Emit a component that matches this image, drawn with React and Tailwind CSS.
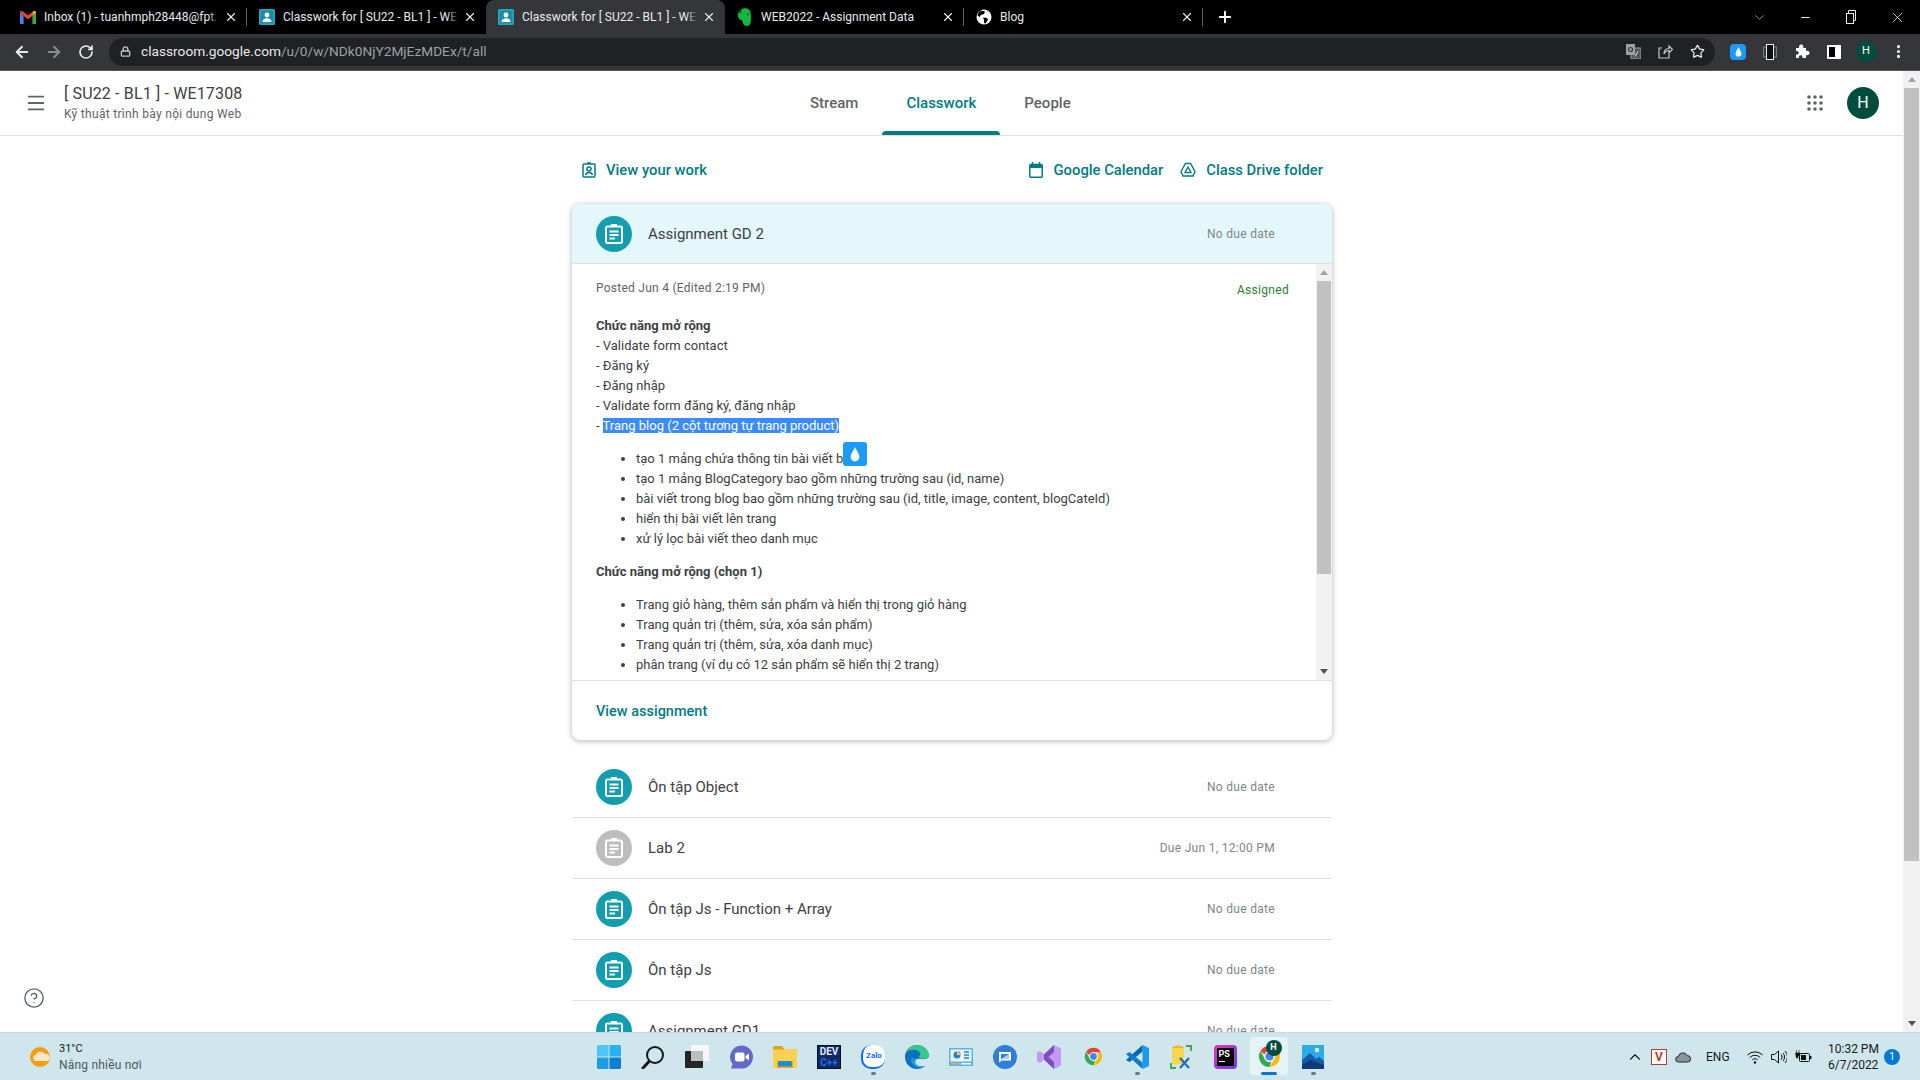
import React from 'react';
import {
  ArrowLeft, ArrowRight, RotateCw, Lock, Star, EllipsisVertical, X, Plus, Minus, ChevronDown,
  ChevronUp, Menu, CircleHelp,
} from 'lucide-react';

const font = { fontFamily: 'Roboto, "Noto Sans", sans-serif' };

const GmailIcon = () => (
  <svg width="16" height="13" viewBox="0 0 16 13">
    <path d="M0 1.500V12a1 1 0 0 0 1 1h2.600V5z" fill="#4285f4" />
    <path d="M12.400 13H15a1 1 0 0 0 1-1V1.500L12.400 5z" fill="#34a853" />
    <path d="M0 1.500 3.600 5 8 8.300 12.400 5V1 L8 4.300 3.600 1 2.500.2C1.300-.5 0 .3 0 1.500z" fill="#ea4335" />
    <path d="M12.400 5 16 1.500c0-1.200-1.300-2-2.500-1.300L12.400 1z" fill="#fbbc04" />
  </svg>
);

const ClassroomIcon = () => (
  <svg width="16" height="16" viewBox="0 0 16 16">
    <rect width="16" height="16" rx="1.500" fill="#25a8c0" />
    <rect x="1.500" y="1.500" width="13" height="13" fill="#1b8da3" />
    <circle cx="8" cy="6" r="2.400" fill="#fff" />
    <path d="M3.500 13c0-2.600 2-3.800 4.500-3.800s4.500 1.200 4.500 3.800z" fill="#fff" />
  </svg>
);

const EvernoteIcon = () => (
  <svg width="15" height="18" viewBox="0 0 15 18">
    <path d="M4.500 1.500 1 5c-.5 3 .5 6.500 3 7 1.500.3 1.500 1.500 1.800 3 .4 2 2.200 3 4.700 3 2.500 0 3.500-3 3.500-8 0-4-.5-7.500-2-8.500C10.500.5 8.500 0 7 .3 5.500.6 5 .8 4.500 1.500z" fill="#14b83e" />
    <path d="M1 5.200h3.500V1.700z" fill="#0a6b24" />
    <circle cx="11" cy="6.500" r="1" fill="#0a6b24" />
  </svg>
);

const BlogGlobe = () => (
  <svg width="16" height="16" viewBox="0 0 16 16">
    <circle cx="8" cy="8" r="7.500" fill="#fff" />
    <path d="M5 1.500 9 2.500 8 5 5 6 3.500 8 1.500 6.500C2 4 3.200 2.500 5 1.500zM7 8.500l4 .5 1 2-2.500 3.500L8 14 8 11z" fill="#000" />
  </svg>
);

const TABS = [
  { title: 'Inbox (1) - tuanhmph28448@fpt.', icon: <GmailIcon /> },
  { title: 'Classwork for [ SU22 - BL1 ] - WE', icon: <ClassroomIcon /> },
  { title: 'Classwork for [ SU22 - BL1 ] - WE', icon: <ClassroomIcon />, active: true },
  { title: 'WEB2022 - Assignment Data', icon: <EvernoteIcon /> },
  { title: 'Blog', icon: <BlogGlobe /> },
];

const BrowserTab = ({ tab, sep }) => (
  <div className={`relative flex h-[34px] w-[239px] items-center pl-3 ${tab.active ? 'rounded-t-lg bg-[#35363a]' : ''}`}>
    <div className="flex w-6 shrink-0 items-center">{tab.icon}</div>
    <div className="relative w-[176px] overflow-hidden">
      <div className="whitespace-nowrap text-xs text-[#e8eaed]">{tab.title}</div>
      {tab.title.length > 26 && (
        <div className={`absolute inset-y-0 right-0 w-3 bg-gradient-to-r from-transparent ${tab.active ? 'to-[#35363a]' : 'to-black'}`} />
      )}
    </div>
    <X size={14} className="ml-1 shrink-0 text-[#e8eaed]" />
    {sep && <div className="absolute right-0 top-2 h-[18px] w-px bg-[#5f6368]" />}
  </div>
);

const TabStrip = () => (
  <div className="flex h-[34px] shrink-0 items-center bg-black pl-2">
    {TABS.map((t, i) => <BrowserTab key={i} tab={t} sep={i === 0 || i === 3 || i === 4} />)}
    <Plus size={18} strokeWidth={2.500} className="ml-[13px] text-white" />
    <div className="flex-1" />
    <div className="flex w-[184px] items-center text-[#e8eaed]">
      <div className="flex w-[46px] justify-center"><ChevronDown size={15} strokeWidth={1.200} className="text-[#bdc1c6]" /></div>
      <div className="flex w-[46px] justify-center"><Minus size={13} /></div>
      <div className="flex w-[46px] justify-center">
        <svg width="12" height="14" viewBox="0 0 12 14" fill="none" stroke="currentColor">
          <rect x="1.500" y="3.500" width="7" height="10" fill="#000" />
          <path d="M3.500 3V.5h7v10H9" />
        </svg>
      </div>
      <div className="flex w-[46px] justify-center"><X size={17} strokeWidth={1.200} /></div>
    </div>
  </div>
);

const ToolSlot = ({ children }) => <div className="flex h-8 w-8 items-center justify-center">{children}</div>;

const Toolbar = () => (
  <div className="flex h-[37px] shrink-0 items-center border-b border-[#55565a] bg-[#35363a] pb-px">
    <div className="flex w-[109px] items-center pl-[13px] text-[#e8eaed]">
      <ArrowLeft size={18} strokeWidth={2.500} />
      <ArrowRight size={18} strokeWidth={2.500} className="ml-[14px] text-[#8a8c90]" />
      <RotateCw size={16} strokeWidth={2.500} className="ml-[15px]" />
    </div>
    <div className="flex h-7 w-[1606px] items-center rounded-full bg-[#202124] pl-[11px] pr-[10px]">
      <Lock size={11} strokeWidth={3} className="text-[#bdc1c6]" />
      <span className="ml-[10px] text-[13.7px] text-[#e8eaed]">classroom.google.com<span className="text-[#9aa0a6]">/u/0/w/NDk0NjY2MjEzMDEx/t/all</span></span>
      <div className="flex-1" />
      <svg width="15" height="15" viewBox="0 0 15 15">
        <rect x="5" y="4" width="10" height="11" fill="#55575b" stroke="#9aa0a6" />
        <rect width="9" height="11" fill="#9aa0a6" />
        <circle cx="4.500" cy="5.500" r="2" fill="none" stroke="#35363a" strokeWidth="1.200" />
        <path d="M9 12.500l3-5" stroke="#e8eaed" />
      </svg>
      <svg className="ml-[17px]" width="15" height="15" viewBox="0 0 15 15" fill="none" stroke="#c4c7c5" strokeWidth="1.200">
        <path d="M11 8.500V14H1V4h3M6 10c0-4 2.500-5.500 5-5.500V2l3.500 3.500L11 9V6.500C9 6.500 7 7.500 6 10z" />
      </svg>
      <Star size={15} className="ml-[17px] text-[#e8eaed]" />
    </div>
    <div className="ml-[7px] flex">
      <ToolSlot>
        <div className="flex h-4 w-4 items-center justify-center rounded-sm bg-[#1a9bf5]">
          <svg width="7" height="10" viewBox="0 0 8 12"><path d="M4 0C3 3 .5 5 .5 8a3.500 3.500 0 0 0 7 0C7.500 5 5 3 4 0z" fill="#fff" /></svg>
        </div>
      </ToolSlot>
      <ToolSlot>
        <svg width="14" height="16" viewBox="0 0 14 16">
          <rect x=".5" y="3" width="13" height="10" fill="none" stroke="#7a7c80" />
          <rect x="3.500" y=".5" width="7" height="15" fill="#111" stroke="#e8eaed" />
        </svg>
      </ToolSlot>
      <ToolSlot>
        <svg width="15" height="15" viewBox="0 0 15 15">
          <path d="M1 4h3.200c-.6-1.500.2-3.500 2-3.500S8.800 2.500 8.200 4H11v3c1.500-.6 3.500.2 3.500 2s-2 2.600-3.500 2v3H7.500c.4-1.500-.5-2.800-1.800-2.800S3.500 12.500 4 14H1v-3.500c1.500.5 2.700-.4 2.700-1.700S2.500 6.700 1 7.200z" fill="#fff" />
        </svg>
      </ToolSlot>
      <ToolSlot>
        <div className="flex h-[14px] w-[14px] justify-end border-2 border-white bg-black">
          <div className="h-full w-1 bg-white" />
        </div>
      </ToolSlot>
      <ToolSlot>
        <div className="flex h-[21px] w-[21px] items-center justify-center rounded-full bg-[#004d40] text-[11px] text-white">H</div>
      </ToolSlot>
      <ToolSlot>
        <EllipsisVertical size={17} strokeWidth={2.500} className="text-white" />
      </ToolSlot>
    </div>
  </div>
);

const ClassHeader = () => (
  <header className="flex h-[65px] shrink-0 items-stretch border-b border-[#e0e0e0] bg-white pl-[27px]">
    <div className="flex w-[759px] items-center">
      <Menu size={22} strokeWidth={2} className="-ml-[2px] text-[#5f6368]" />
      <div className="ml-[17px]">
        <div className="text-[16px] leading-5 tracking-[0.15px] text-[#3c4043]">[ SU22 - BL1 ] - WE17308</div>
        <div className="mt-[2px] text-xs leading-4 tracking-[0.3px] text-[#5f6368]">Kỹ thuật trình bày nội dung Web</div>
      </div>
    </div>
    <nav className="flex">
      <div className="flex items-center px-6 text-[15px] font-medium text-[#5f6368]">Stream</div>
      <div className="relative flex items-center px-6 text-[15px] font-medium text-[#007b83]">
        Classwork
        <div className="absolute bottom-0 left-0 right-0 h-1 rounded-t bg-[#007b83]" />
      </div>
      <div className="flex items-center px-6 text-[15px] font-medium text-[#5f6368]">People</div>
    </nav>
    <div className="flex flex-1 items-center justify-end pr-6">
      <svg width="16" height="16" viewBox="0 0 16 16" fill="#5f6368">
        {[2, 8, 14].map(y => [2, 8, 14].map(x => <circle key={`${x}-${y}`} cx={x} cy={y} r="1.800" />))}
      </svg>
      <div className="ml-[24px] flex h-8 w-8 items-center justify-center rounded-full bg-[#004d40] text-base text-white">H</div>
    </div>
  </header>
);

const AssignmentIcon = ({ muted }) => (
  <div className={`flex h-9 w-9 shrink-0 items-center justify-center rounded-full ${muted ? 'bg-[#bdbdbd]' : 'bg-[#129eaf]'}`}>
    <svg width="18" height="20" viewBox="0 0 18 20" fill="none" stroke="#fff" strokeWidth="2">
      <rect x="1" y="2.500" width="16" height="16.500" rx="1.500" />
      <path d="M4.500 7.500h9M4.500 11h9M4.500 14.500h5.500" strokeWidth="1.800" />
      <rect x="6" y="0" width="6" height="3" fill="#fff" stroke="none" />
    </svg>
  </div>
);

const ROWS = [
  { title: 'Ôn tập Object', due: 'No due date' },
  { title: 'Lab 2', due: 'Due Jun 1, 12:00 PM', muted: true },
  { title: 'Ôn tập Js - Function + Array', due: 'No due date' },
  { title: 'Ôn tập Js', due: 'No due date' },
  { title: 'Assignment GD1', due: 'No due date' },
];

const BULLETS_1 = [
  'tạo 1 mảng chứa thông tin bài viết b',
  'tạo 1 mảng BlogCategory bao gồm những trường sau (id, name)',
  'bài viết trong blog bao gồm những trường sau (id, title, image, content, blogCateId)',
  'hiển thị bài viết lên trang',
  'xử lý lọc bài viết theo danh mục',
];

const BULLETS_2 = [
  'Trang giỏ hàng, thêm sản phẩm và hiển thị trong giỏ hàng',
  'Trang quản trị (thêm, sửa, xóa sản phẩm)',
  'Trang quản trị (thêm, sửa, xóa danh mục)',
  'phân trang (ví dụ có 12 sản phẩm sẽ hiển thị 2 trang)',
];

const Bullets = ({ items }) => (
  <ul className="list-disc pl-[40px]">
    {items.map((b, i) => <li key={i} className="h-5 whitespace-nowrap">{b}</li>)}
  </ul>
);

const AssignmentCard = () => (
  <section className="overflow-hidden rounded-lg bg-white shadow-[0_1px_5px_1px_rgba(60,64,67,0.3)]">
    <div className="flex h-[60px] items-center border-b border-[#e0e0e0] bg-[#e4f7fb] pl-6 pr-[57px]">
      <AssignmentIcon />
      <span className="ml-4 mt-[2px] text-[15px] text-[#3c4043]">Assignment GD 2</span>
      <span className="ml-auto text-xs tracking-[0.3px] text-[#80868b]">No due date</span>
    </div>
    <div className="flex h-[417px] border-b border-[#e0e0e0]">
      <div className="relative flex-1 overflow-hidden pl-6 pr-[27px] pt-[14px] text-[13px] leading-5 text-[#3c4043]">
        <div className="flex items-start justify-between">
          <span className="text-xs leading-5 tracking-[0.25px] text-[#5f6368]">Posted Jun 4 (Edited 2:19 PM)</span>
          <span className="text-xs leading-6 tracking-[0.3px] text-[#2e7d32]">Assigned</span>
        </div>
        <div className="mt-[14px] font-bold">Chức năng mở rộng</div>
        <div>- Validate form contact</div>
        <div>- Đăng ký</div>
        <div>- Đăng nhập</div>
        <div>- Validate form đăng ký, đăng nhập</div>
        <div>- <span className="bg-[#3b8bff] text-white">Trang blog (2 cột tương tự trang product)</span></div>
        <div className="mt-[13px]"><Bullets items={BULLETS_1} /></div>
        <div className="mt-[13px] font-bold">Chức năng mở rộng (chọn 1)</div>
        <div className="mt-[13px]"><Bullets items={BULLETS_2} /></div>
        <div className="absolute left-[271px] top-[178px] flex h-6 w-6 items-center justify-center rounded-[3px] bg-[#1a9bf5]">
          <svg width="10" height="15" viewBox="0 0 8 12"><path d="M4 0C3 3 .5 5 .5 8a3.500 3.500 0 0 0 7 0C7.500 5 5 3 4 0z" fill="#fff" /></svg>
        </div>
      </div>
      <div className="flex w-4 shrink-0 flex-col items-center bg-[#f1f1f1]">
        <div className="mt-[6px] h-0 w-0 border-x-[4px] border-b-[5px] border-x-transparent border-b-[#a3a3a3]" />
        <div className="mt-[6px] h-[293px] w-[14px] bg-[#c1c1c1]" />
        <div className="mt-auto mb-[6px] h-0 w-0 border-x-[4px] border-t-[5px] border-x-transparent border-t-[#505050]" />
      </div>
    </div>
    <div className="flex h-[59px] items-center pl-6 pt-[2px] text-[14.5px] font-medium text-[#007b83]">View assignment</div>
  </section>
);

const AssignmentRow = ({ row }) => (
  <div className="flex h-[61px] shrink-0 items-center border-b border-[#e0e0e0] pl-6 pr-[57px]">
    <AssignmentIcon muted={row.muted} />
    <span className="ml-4 text-[15px] text-[#3c4043]">{row.title}</span>
    <span className="ml-auto text-xs tracking-[0.3px] text-[#80868b]">{row.due}</span>
  </div>
);

const ClassPage = () => (
  <div className="relative flex min-h-0 flex-1 overflow-hidden bg-white">
    <div className="flex min-w-0 flex-1 flex-col">
      <ClassHeader />
      <main className="ml-[572px] w-[760px]">
        <div className="flex h-[68px] items-center text-[14.8px] font-medium text-[#007b83]">
          <svg className="ml-[10px]" width="14" height="16" viewBox="0 0 14 16" fill="none" stroke="currentColor" strokeWidth="1.500">
            <rect x="1" y="2" width="12" height="13" rx="1" />
            <circle cx="7" cy="7" r="2" />
            <path d="M3.500 13c.5-2 2-2.500 3.500-2.500s3 .5 3.500 2.500M5 1h4" />
          </svg>
          <span className="ml-[10px]">View your work</span>
          <svg className="ml-auto" width="14" height="16" viewBox="0 0 14 16" fill="none" stroke="currentColor" strokeWidth="1.500">
            <rect x=".8" y="2.500" width="12.400" height="12.700" rx="1" />
            <path d="M.8 4.500h12.400" strokeWidth="3" />
            <path d="M3.500 0v2M10.500 0v2" />
          </svg>
          <span className="ml-[11px]">Google Calendar</span>
          <svg className="ml-[17px]" width="16" height="16" viewBox="0 0 16 16" fill="none" stroke="currentColor" strokeWidth="1.400">
            <path d="M5.500 1.500h5l4.500 8-2 4.500H3L1 9.500z" />
            <path d="M8 5l3 5.500H5z" />
          </svg>
          <span className="ml-[10px] mr-[9px]">Class Drive folder</span>
        </div>
        <AssignmentCard />
        <div className="mt-[17px]">
          {ROWS.map((r, i) => <AssignmentRow key={i} row={r} />)}
        </div>
      </main>
    </div>
    <div className="flex w-[17px] shrink-0 flex-col items-center bg-[#f1f1f1]">
      <div className="mt-[6px] h-0 w-0 border-x-[4px] border-b-[5px] border-x-transparent border-b-[#a3a3a3]" />
      <div className="mt-[6px] h-[773px] w-[15px] bg-[#c1c1c1]" />
      <div className="mt-auto mb-[6px] h-0 w-0 border-x-[4px] border-t-[5px] border-x-transparent border-t-[#505050]" />
    </div>
    <CircleHelp size={22} strokeWidth={1.500} className="absolute left-[23px] top-[916px] text-[#5f6368]" />
  </div>
);

const ChromeIcon = ({ size = 20 }) => (
  <svg width={size} height={size} viewBox="0 0 24 24">
    <path d="M12 1a11 11 0 0 1 9.500 5.500H12A5.500 5.500 0 0 0 6.800 10L2.600 6.300A11 11 0 0 1 12 1z" fill="#ea4335" />
    <path d="M21.500 6.500A11 11 0 0 1 12 23l4.700-8.200A5.500 5.500 0 0 0 16.500 8z" fill="#fbbc04" />
    <path d="M12 23A11 11 0 0 1 2.600 6.300l4.700 8.500A5.500 5.500 0 0 0 14 17z" fill="#34a853" />
    <circle cx="12" cy="12" r="5.500" fill="#fff" />
    <circle cx="12" cy="12" r="4.300" fill="#4285f4" />
  </svg>
);

const TASK_ICONS = [
  {
    el: (
      <svg width="24" height="24" viewBox="0 0 24 24">
        <path d="M0 1.500A1.500 1.500 0 0 1 1.500 0h10v11.500H0z" fill="#4fc6fb" />
        <path d="M12.500 0h10A1.500 1.500 0 0 1 24 1.500v10H12.500z" fill="#2ab0f3" />
        <path d="M0 12.500h11.500V24h-10A1.500 1.500 0 0 1 0 22.500z" fill="#1b9de6" />
        <path d="M12.500 12.500H24v10a1.500 1.500 0 0 1-1.500 1.500h-10z" fill="#0a7fd4" />
      </svg>
    ),
  },
  {
    el: (
      <svg width="24" height="24" viewBox="0 0 24 24" fill="none" stroke="#161616">
        <circle cx="14" cy="10" r="8" strokeWidth="2" />
        <path d="M8 16.500 2 23" strokeWidth="3" strokeLinecap="round" />
      </svg>
    ),
  },
  {
    el: (
      <svg width="24" height="24" viewBox="0 0 24 24">
        <rect x="6" y="0" width="18" height="16" rx="1" fill="#f4f6f7" />
        <rect x="0" y="6" width="18" height="17" rx="1" fill="#252525" />
        <rect x="6" y="6" width="12" height="10" fill="#bdbdbd" />
      </svg>
    ),
  },
  {
    el: (
      <svg width="24" height="24" viewBox="0 0 24 24">
        <path d="M12.500 0.500a11.500 11.500 0 0 1 0 23H2l1.500-4.500A11.500 11.500 0 0 1 12.500.5z" fill="#6468c9" />
        <rect x="6" y="7.500" width="9.500" height="9" rx="2" fill="#fff" />
        <path d="M16.500 11 20 8.500v7l-3.500-2.500z" fill="#fff" />
      </svg>
    ),
  },
  {
    el: (
      <svg width="24" height="22" viewBox="0 0 24 22">
        <path d="M0 1.500A1.500 1.500 0 0 1 1.500 0H9l2.500 3H24v17.500a1.500 1.500 0 0 1-1.500 1.500h-21A1.500 1.500 0 0 1 0 20.500z" fill="#fbd24f" />
        <path d="M0 1.500A1.500 1.500 0 0 1 1.500 0H9l2.500 3.500H0z" fill="#d9a21f" />
        <path d="M4 15h16v7H4z" fill="#f2a91c" />
        <rect x="5" y="15" width="14" height="5.500" rx="1.500" fill="#1f8ecf" />
      </svg>
    ),
  },
  {
    el: (
      <div className="flex h-6 w-6 flex-col items-center justify-center bg-[#10296b] text-[10px] font-bold leading-[11px] shadow-[inset_0_0_0_1px_#111]">
        <span className="text-[#e4e8f5]">DEV</span><span className="text-[#2a6fe0]">C++</span>
      </div>
    ),
  },
  {
    el: (
      <div className="flex h-6 w-6 items-center justify-center rounded-[10px] border-b-2 border-l-2 border-[#0a6cf5] bg-white text-[8px] font-bold text-[#0a6cf5]">Zalo</div>
    ),
    dot: true,
  },
  {
    el: (
      <svg width="24" height="24" viewBox="0 0 24 24">
        <path d="M12 0a12 12 0 1 0 0 24c3 0 6-1 8-3-5 2-10 0-10-4 0-3 3-4 6-3 4 .5 8-.5 8-3A12 12 0 0 0 12 0z" fill="#0c6fc0" />
        <path d="M24 11c0-6-5-11-12-11C7 0 2 3 .5 8 3 5 7 4 11 5c3 1 5 3 4 5-.5 1-1 1-1 2 1 3 10 2 10-1z" fill="#35c88f" />
        <path d="M6 15c0 6 8 10 14 6-5 1.500-10-1-10-4 0-1 .5-2 1-3-2-1-5-1-5 1z" fill="#1b9be0" />
      </svg>
    ),
  },
  {
    el: (
      <svg width="24" height="18" viewBox="0 0 24 18">
        <rect width="24" height="18" rx="1" fill="#54b4ee" />
        <rect x="1.500" y="1.500" width="21" height="12" fill="#e6f5fd" />
        <path d="M8 3.500a3.500 3.500 0 1 0 3.500 3.500H8z" fill="#2d7fc4" />
        <path d="M8.500 3v3.500H12A3.500 3.500 0 0 0 8.500 3z" fill="#f3a53a" />
        <path d="M15 4h5M15 7h5M15 10h5" stroke="#2d7fc4" strokeWidth="1.400" />
        <rect x="2" y="15" width="9" height="1.500" fill="#f3a53a" />
        <rect x="12" y="15" width="10" height="1.500" fill="#fff" />
      </svg>
    ),
  },
  {
    el: (
      <svg width="24" height="24" viewBox="0 0 24 24">
        <circle cx="12" cy="12" r="12" fill="#2f7ed8" />
        <path d="M6 7h12v8.500H9l-3 2z" fill="#fff" />
        <path d="M8 9h8v5H8z" fill="#2f7ed8" />
        <path d="M8 14l8-5v5z" fill="#a8cdf2" />
      </svg>
    ),
  },
  {
    el: (
      <svg width="24" height="24" viewBox="0 0 24 24">
        <path d="M17 0 24 3.500v17L17 24 7 14.500 3 18l-3-1.500v-9L3 6l4 3.500z" fill="#c19bf0" />
        <path d="M17 0v24L7 14.500v-5z" fill="#7c4dc4" />
        <path d="M17 7v10l-5.500-5z" fill="#c19bf0" />
        <path d="M3 9v6l3-3z" fill="#c19bf0" />
      </svg>
    ),
  },
  { el: <ChromeIcon size={19} /> },
  {
    el: (
      <svg width="24" height="24" viewBox="0 0 24 24">
        <path d="M17.500 0 24 3v18l-6.500 3V0z" fill="#1e9be8" />
        <path d="M17.500 0v6.500L8 14.500 4.500 17 1 15 7 9.500z" fill="#0867b5" />
        <path d="M1 9 4.500 7 17.500 17.500V24L7 14.500z" fill="#0d7dd0" />
      </svg>
    ),
    dot: true,
  },
  {
    el: (
      <svg width="22" height="24" viewBox="0 0 22 24">
        <ellipse cx="8" cy="3" rx="6" ry="2.500" fill="#e8b838" />
        <path d="M2 3v15c2 2 10 2 12 0V3z" fill="#f6d64c" />
        <path d="M16 1h5v5M1 18v5h5" fill="none" stroke="#3aa64a" strokeWidth="1.800" />
        <path d="M10 13l9 10M19 13l-9 10" stroke="#1a6fc4" strokeWidth="2.200" />
      </svg>
    ),
  },
  {
    el: (
      <div className="h-6 w-[23px] rounded-sm bg-gradient-to-br from-[#ec2a9c] via-[#a637d8] to-[#6a3cf0] p-[3px]">
        <div className="flex h-full w-full flex-col bg-black pl-[2px] pt-px">
          <span className="text-[9px] font-bold leading-[10px] text-white">PS</span>
          <div className="mt-[2px] h-px w-[6px] bg-white" />
        </div>
      </div>
    ),
  },
  {
    el: (
      <div className="relative h-[23px] w-[23px]">
        <ChromeIcon size={23} />
        <div className="absolute -right-[1px] -top-[5px] flex h-4 w-4 items-center justify-center rounded-full bg-[#004d40] text-[9px] font-bold text-white">H</div>
      </div>
    ),
    active: true,
  },
  {
    el: (
      <svg width="22" height="24" viewBox="0 0 22 24">
        <rect width="22" height="24" fill="#2aace8" />
        <circle cx="15" cy="5" r="2.200" fill="#e6f6ff" />
        <path d="M0 24V15l8-7 6 6 3-2 5 4v8z" fill="#1a5ba6" />
        <path d="M0 24v-4l8-5 14 5v4z" fill="#0f3a78" />
      </svg>
    ),
    dot: true,
  },
];

const TaskIcon = ({ item }) => (
  <div className="relative flex h-[47px] w-11 items-center justify-center">
    {item.active && <div className="absolute inset-x-[3px] top-[4px] h-[38px] rounded bg-[#e6f3f6]" />}
    <div className="relative flex h-6 items-center">{item.el}</div>
    {item.dot && <div className="absolute bottom-[5px] h-[3px] w-[5px] rounded-full bg-[#6b7a80]" />}
    {item.active && <div className="absolute bottom-[5px] h-[3px] w-4 rounded-full bg-[#0078d4]" />}
  </div>
);

const Taskbar = () => (
  <footer className="flex h-12 shrink-0 items-center border-t border-[#c4dde3] bg-[#cfe6ec] text-[#1a1a1a]">
    <div className="flex w-[587px] items-center pl-[30px]">
      <svg width="20" height="22" viewBox="0 0 20 22">
        <circle cx="10" cy="11" r="10" fill="#f59e0b" />
        <path d="M5 15a3.500 3.500 0 0 1 1-6.500 5 5 0 0 1 9-.5 3.500 3.500 0 0 1 2 7z" fill="#fde6c8" />
      </svg>
      <div className="ml-[9px]">
        <div className="text-[11px] leading-[17px]">31°C</div>
        <div className="text-xs leading-[17px] tracking-[0.2px] text-[#4a5a60]">Nắng nhiều nơi</div>
      </div>
    </div>
    <div className="flex">
      {TASK_ICONS.map((item, i) => <TaskIcon key={i} item={item} />)}
    </div>
    <div className="flex flex-1 items-center justify-end pr-[20px]">
      <ChevronUp size={18} strokeWidth={1.500} />
      <div className="ml-[7px] flex h-4 w-4 items-center justify-center border border-[#b33] bg-white text-xs font-bold leading-none text-[#c0392b]">V</div>
      <svg className="ml-2" width="16" height="12" viewBox="0 0 17 13">
        <path d="M3.500 12a3 3 0 0 1 0-6 5 5 0 0 1 9.500-1 3.500 3.500 0 0 1 .5 7z" fill="#8a9499" stroke="#222" />
      </svg>
      <span className="ml-[15px] w-[22px] text-xs">ENG</span>
      <svg className="ml-[19px]" width="16" height="14" viewBox="0 0 16 14" fill="none" stroke="#111">
        <path d="M.5 5a10.500 10.500 0 0 1 15 0M2.800 7.500a7.200 7.200 0 0 1 10.400 0M5.200 10a3.800 3.800 0 0 1 5.600 0" />
        <circle cx="8" cy="12.500" r="1.200" fill="#111" stroke="none" />
      </svg>
      <svg className="ml-2" width="16" height="14" viewBox="0 0 16 14" fill="none" stroke="#111">
        <path d="M.5 4.500h3L7.500 1v12l-4-3.500h-3zM10 4.500a3.500 3.500 0 0 1 0 5M12 3a6 6 0 0 1 0 8M14 1a8.500 8.500 0 0 1 0 12" />
      </svg>
      <svg className="ml-2" width="17" height="14" viewBox="0 0 17 14">
        <rect x="4.500" y="3.500" width="10" height="8" rx="1" fill="none" stroke="#111" />
        <rect x="6" y="5" width="5" height="5" fill="#111" />
        <rect x="15" y="6" width="1.500" height="3" fill="#111" />
        <path d="M1.500 0v3M4 0v3M.5 3h4.500v2.500H3V8H1.500z" fill="#111" stroke="#111" strokeWidth=".6" />
      </svg>
      <div className="ml-4 w-[49px] text-right text-xs leading-4">
        <div className="whitespace-nowrap">10:32 PM</div>
        <div>6/7/2022</div>
      </div>
      <div className="ml-[7px] flex h-4 w-4 items-center justify-center rounded-full bg-[#0078d4] text-[10px] text-white">1</div>
    </div>
  </footer>
);

export default function App() {
  return (
    <div className="flex h-[1080px] w-[1920px] flex-col overflow-hidden" style={font}>
      <TabStrip />
      <Toolbar />
      <ClassPage />
      <Taskbar />
    </div>
  );
}
